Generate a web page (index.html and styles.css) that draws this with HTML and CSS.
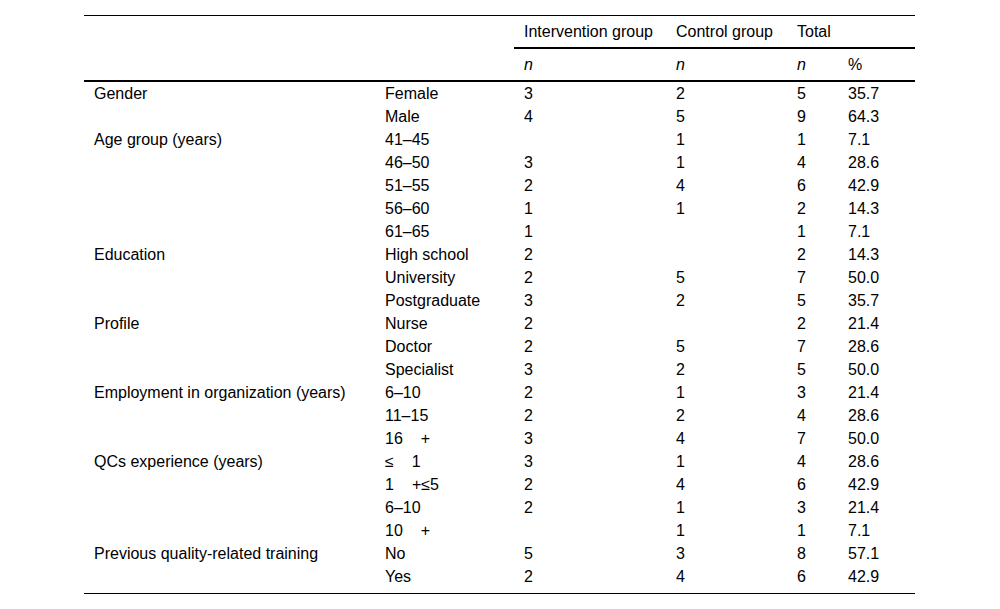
FILE: index.html
```html
<!DOCTYPE html>
<html lang="en">
<head>
<meta charset="utf-8">
<title>Table</title>
<link rel="stylesheet" href="styles.css">
</head>
<body>
<table class="data">
  <colgroup>
    <col class="c1"><col class="c2"><col class="c3"><col class="c4"><col class="c5"><col class="c6">
  </colgroup>
  <thead>
    <tr class="h1">
      <th class="blank" rowspan="2"></th>
      <th class="blank" rowspan="2"></th>
      <th class="grp">Intervention group</th>
      <th class="grp">Control group</th>
      <th class="grp" colspan="2">Total</th>
    </tr>
    <tr class="h2">
      <th><em>n</em></th>
      <th><em>n</em></th>
      <th><em>n</em></th>
      <th>%</th>
    </tr>
  </thead>
  <tbody>
    <tr><td>Gender</td><td>Female</td><td>3</td><td>2</td><td>5</td><td>35.7</td></tr>
    <tr><td></td><td>Male</td><td>4</td><td>5</td><td>9</td><td>64.3</td></tr>
    <tr><td>Age group (years)</td><td>41–45</td><td></td><td>1</td><td>1</td><td>7.1</td></tr>
    <tr><td></td><td>46–50</td><td>3</td><td>1</td><td>4</td><td>28.6</td></tr>
    <tr><td></td><td>51–55</td><td>2</td><td>4</td><td>6</td><td>42.9</td></tr>
    <tr><td></td><td>56–60</td><td>1</td><td>1</td><td>2</td><td>14.3</td></tr>
    <tr><td></td><td>61–65</td><td>1</td><td></td><td>1</td><td>7.1</td></tr>
    <tr><td>Education</td><td>High school</td><td>2</td><td></td><td>2</td><td>14.3</td></tr>
    <tr><td></td><td>University</td><td>2</td><td>5</td><td>7</td><td>50.0</td></tr>
    <tr><td></td><td>Postgraduate</td><td>3</td><td>2</td><td>5</td><td>35.7</td></tr>
    <tr><td>Profile</td><td>Nurse</td><td>2</td><td></td><td>2</td><td>21.4</td></tr>
    <tr><td></td><td>Doctor</td><td>2</td><td>5</td><td>7</td><td>28.6</td></tr>
    <tr><td></td><td>Specialist</td><td>3</td><td>2</td><td>5</td><td>50.0</td></tr>
    <tr><td>Employment in organization (years)</td><td>6–10</td><td>2</td><td>1</td><td>3</td><td>21.4</td></tr>
    <tr><td></td><td>11–15</td><td>2</td><td>2</td><td>4</td><td>28.6</td></tr>
    <tr><td></td><td>16<span class="sp"></span>+</td><td>3</td><td>4</td><td>7</td><td>50.0</td></tr>
    <tr><td>QCs experience (years)</td><td>≤<span class="sp"></span>1</td><td>3</td><td>1</td><td>4</td><td>28.6</td></tr>
    <tr><td></td><td>1<span class="sp"></span>+≤5</td><td>2</td><td>4</td><td>6</td><td>42.9</td></tr>
    <tr><td></td><td>6–10</td><td>2</td><td>1</td><td>3</td><td>21.4</td></tr>
    <tr><td></td><td>10<span class="sp"></span>+</td><td></td><td>1</td><td>1</td><td>7.1</td></tr>
    <tr><td>Previous quality-related training</td><td>No</td><td>5</td><td>3</td><td>8</td><td>57.1</td></tr>
    <tr class="last"><td></td><td>Yes</td><td>2</td><td>4</td><td>6</td><td>42.9</td></tr>
  </tbody>
</table>
</body>
</html>
```

FILE: styles.css
```css
html, body {
  margin: 0;
  padding: 0;
  background: #fff;
}

body {
  font-family: "Liberation Sans", Arial, sans-serif;
  font-size: 16px;
  color: #000;
}

.data {
  margin: 15px 0 0 84px;
  width: 831px;
  table-layout: fixed;
  border-collapse: separate;
  border-spacing: 0;
  border-top: 1px solid #000;
  border-bottom: 1px solid #000;
}

.c1 { width: 291px; }
.c2 { width: 139px; }
.c3 { width: 152px; }
.c4 { width: 121px; }
.c5 { width: 51px; }
.c6 { width: 77px; }

.data th,
.data td {
  text-align: left;
  font-weight: normal;
  vertical-align: top;
  line-height: 17px;
  padding: 3px 10px;
  white-space: nowrap;
}

.data .h1 th {
  padding-top: 7px;
  padding-bottom: 7px;
}

.data .h1 th.grp,
.data .h1 th.blank,
.data .h2 th {
  border-bottom: 2px solid #000;
}

.data .h2 th {
  padding-top: 7px;
  padding-bottom: 7px;
}

.data .last td {
  padding-bottom: 8px;
}

.sp {
  display: inline-block;
  width: 18px;
}
```
